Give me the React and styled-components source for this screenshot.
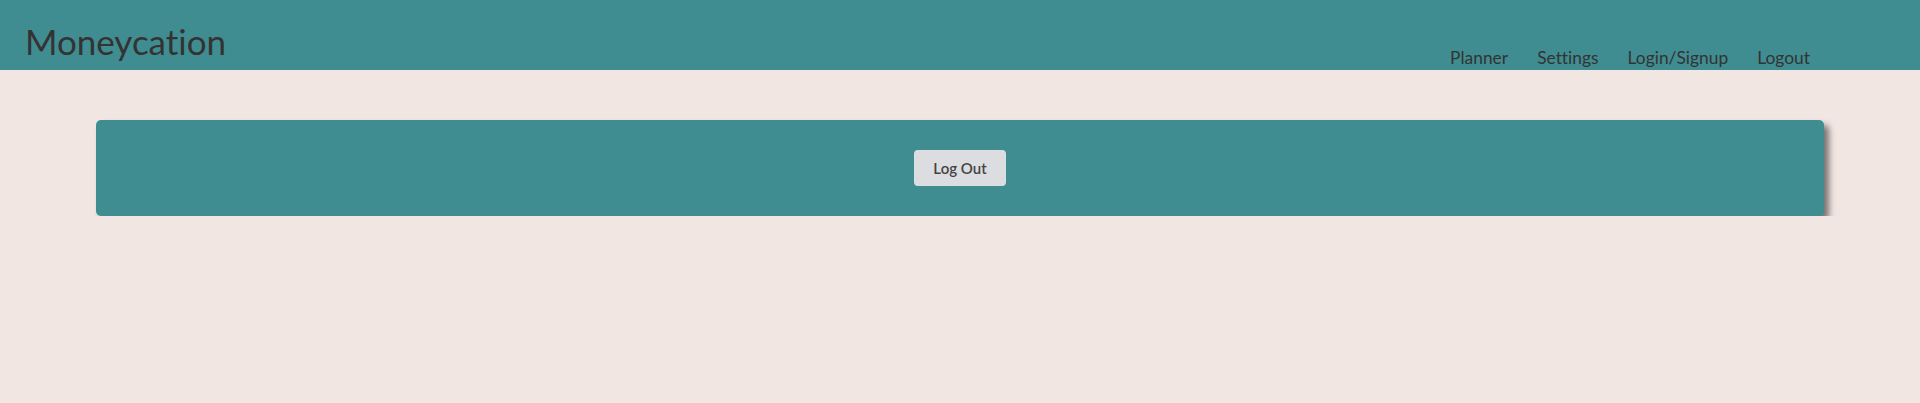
import styled, { createGlobalStyle } from "styled-components";

const GlobalStyle = createGlobalStyle`
    body {
        margin: 0;
        background-color: #f2e6e2;
        font-family: Lato, "Open Sans", sans-serif;
        font-variant-ligatures: none;
        color: #333;
    }
`;

const links = ["Planner", "Settings", "Login/Signup", "Logout"];

const App = () => {
    return (
        <>
            <GlobalStyle />
            <Header>
                <Title>Moneycation</Title>
                <Nav>
                    {links.map(link => (
                        <NavLink key={link}>{link}</NavLink>
                    ))}
                </Nav>
            </Header>
            <Card>
                <Button>Log Out</Button>
            </Card>
        </>
    );
};

const Header = styled.header`
    height: 70px;
    background-color: #3f8d91;
    display: flex;
    justify-content: space-between;
    align-items: flex-start;
    padding: 0 110px 0 25px;
`;

const Title = styled.h1`
    margin: 20px 0 0;
    font-size: 35px;
    font-weight: 400;
    line-height: 1.2;
    color: #333;
`;

const Nav = styled.nav`
    display: flex;
    gap: 29px;
    margin-top: 48px;
`;

const NavLink = styled.a`
    font-size: 17.4px;
    line-height: 1.2;
    color: #333;
    cursor: pointer;
`;

const Card = styled.div`
    width: 90%;
    margin: 50px auto 0;
    padding: 30px 0;
    box-sizing: border-box;
    display: flex;
    justify-content: center;
    background-color: #3f8d91;
    border-radius: 5px;
    box-shadow: 5px 5px 6px rgb(0 0 0 / 50%);
`;

const Button = styled.button`
    height: 36px;
    padding: 0 19px;
    border: none;
    border-radius: 4px;
    background-color: #dcdde0;
    color: #444;
    font-family: Lato, sans-serif;
    font-size: 15px;
    font-weight: 600;
    font-variant-ligatures: none;
    cursor: pointer;
`;

export default App;
